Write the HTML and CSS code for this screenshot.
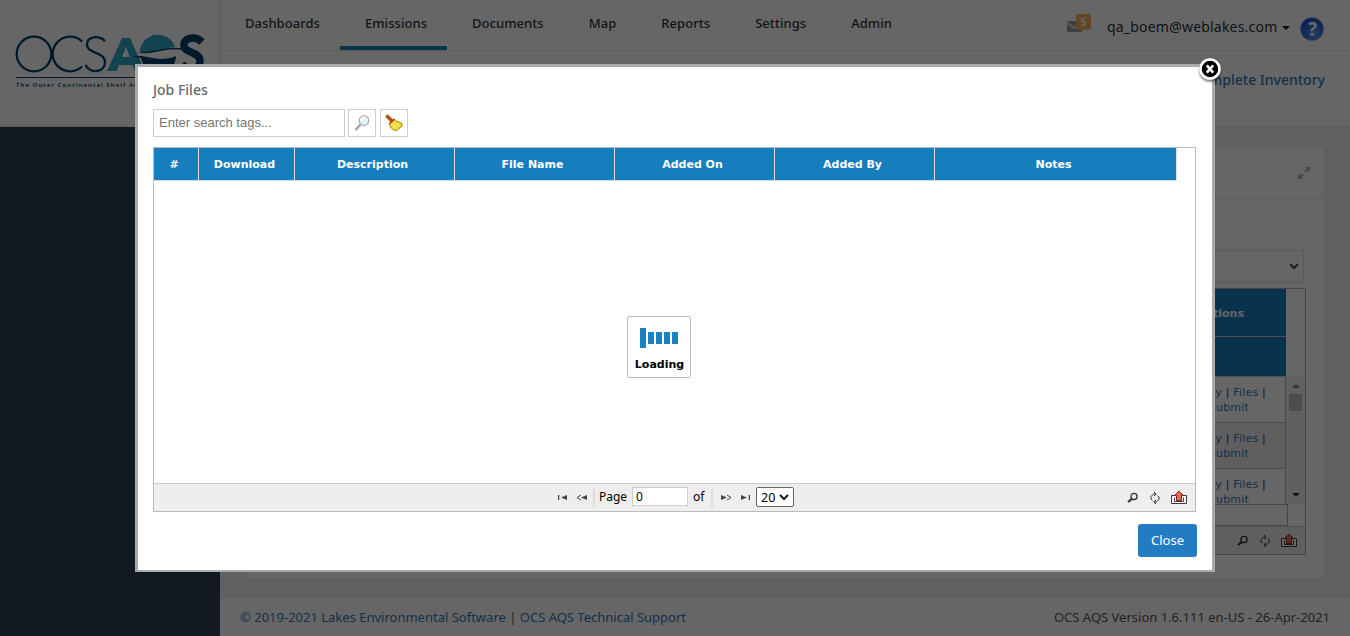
FILE: index.html
```html
<!DOCTYPE html>
<html lang="en">
<head>
<meta charset="utf-8">
<title>OCS AQS - Job Files</title>
<link rel="stylesheet" href="styles.css">
</head>
<body>
<svg width="0" height="0" class="defs">
  <symbol id="i-find" viewBox="0 0 12 12"><circle cx="7" cy="4.5" r="3.1" fill="none" stroke="#333" stroke-width="1.3"/><path d="M5 6.8L1 10" stroke="#333" stroke-width="2.2"/></symbol>
  <symbol id="i-sync" viewBox="0 0 12 12"><path d="M6.5 2H4.5L2 4.5V7L3.5 8.5M5.5 10H7.5L10 7.500V5L8.500 3.500M5 0L7.200 2L5 4M7 8L4.800 10L7 12" fill="none" stroke="#333"/></symbol>
  <symbol id="i-export" viewBox="0 0 16 14"><path d="M4 4.500H.500V12.500H15.500V4.500H12" fill="#fff" stroke="#435"/><path d="M3.500 6.500V10.500H12.500V6.500" fill="none" stroke="#534"/><path d="M8 .2L12.500 4.500H10.500V9.500H5.500V4.500H3.500Z" fill="#ee6a52" stroke="#74271e"/></symbol>
</svg>
<div class="app">
  <aside class="sidebar">
    <div class="brand">
      <svg width="219" height="126" viewBox="0 0 219 126">
        <g fill="none" stroke="#00406b" stroke-width="2.300">
          <circle cx="34" cy="54" r="17.300"/>
          <path d="M82 41.500A17.300 17.300 0 1 0 82 66.500"/>
          <path d="M105 41C99 35 87 36 87 44.500C87 54 105 51.500 105 62C105 73 90 74 85.500 65"/>
        </g>
        <path fill="#2cabc2" fill-rule="evenodd" d="M107 71L122 38H130L145 71H135L132.500 65H119L116.500 71ZM122 57H130L126 47Z"/>
        <path fill="#2cabc2" d="M140 51A18 18 0 0 1 175 47C163 48 155 54 140 51Z"/>
        <path fill="#00406b" d="M133 57C146 53 157 64 176 56C176 66 168 72 158 72C148 72 143 66 141 58Z"/>
        <path d="M140 52C154 55 164 45 185 50" fill="none" stroke="#00406b" stroke-width="1.500"/>
        <path d="M202 42C196 36 184 37 184 45C184 54 200 51 200 61C200 71 187 70 182 64" fill="none" stroke="#00406b" stroke-width="7.500"/>
        <path d="M16 77.500H204" stroke="#00406b"/>
        <text class="tagline" x="16" y="86.500">The Outer Continental Shelf Air Quality</text>
      </svg>
    </div>
  </aside>
  <div class="main">
    <header class="topbar">
      <nav class="nav"><a>Dashboards</a><a class="active">Emissions</a><a>Documents</a><a>Map</a><a>Reports</a><a>Settings</a><a>Admin</a></nav>
      <div class="user">
        <div class="mail"><svg width="15" height="11" viewBox="0 0 15 11"><rect width="15" height="11" rx="1.500" fill="#999c9e"/><path d="M0 1.500L6 6.500Q7.500 7.500 9 6.500L15 1.500" fill="none" stroke="#fff" stroke-width="1.200"/></svg><span class="badge">5</span></div>
        <span class="email">qa_boem@weblakes.com</span><i class="caret"></i>
        <span class="help">?</span>
      </div>
    </header>
    <div class="subbar"><a>Complete Inventory</a></div>
    <section class="content">
      <div class="card">
        <div class="card-head"><svg width="12" height="12" viewBox="0 0 12 12"><path d="M7 0H12V5L10.300 3.300L7.800 5.800L6.200 4.200L8.700 1.700ZM5 12H0V7L1.700 8.700L4.200 6.200L5.800 7.800L3.300 10.300Z" fill="#b0b0b0"/></svg></div>
        <div class="card-body">
          <div class="select"><svg width="10" height="7" viewBox="0 0 10 7"><path d="M1 1L5 5L9 1" fill="none" stroke="#444" stroke-width="2"/></svg></div>
          <div class="inventory">
            <div class="inv-head"><div>Actions</div><div></div></div>
            <div class="inv-body">
              <div class="inv-rows">
                <div class="row"><p><a>Inventory</a> | <a>Files</a> |</p><p><a>Resubmit</a></p></div>
                <div class="row alt"><p><a>Inventory</a> | <a>Files</a> |</p><p><a>Resubmit</a></p></div>
                <div class="row"><p><a>Inventory</a> | <a>Files</a> |</p><p><a>Resubmit</a></p></div>
              </div>
              <div class="scroll"><i class="up"></i><i class="thumb"></i><i class="down"></i></div>
            </div>
            <div class="hscroll"></div>
            <div class="tools inv-tools"><svg width="12" height="12"><use href="#i-find"/></svg><svg width="12" height="12"><use href="#i-sync"/></svg><svg width="16" height="14"><use href="#i-export"/></svg></div>
          </div>
        </div>
      </div>
    </section>
    <footer class="footer"><div><a>© 2019-2021 Lakes Environmental Software</a> | <a>OCS AQS Technical Support</a></div><div class="version">OCS AQS Version 1.6.111 en-US - 26-Apr-2021</div></footer>
  </div>
</div>
<div class="overlay"></div>
<div class="modal">
  <svg class="close-x" width="28" height="28" viewBox="0 0 28 28"><circle cx="14" cy="14" r="9.500" fill="#000" stroke="#fff" stroke-width="2.600"/><path d="M10.800 10.300L17.200 17.700M17.200 10.300L10.800 17.700" stroke="#fff" stroke-width="2.600"/></svg>
  <h1>Job Files</h1>
  <div class="search">
    <input type="text" placeholder="Enter search tags...">
    <button><svg width="16" height="16" viewBox="0 0 16 16"><path d="M6.500 9.500L1.500 15" stroke="#a4a4a4" stroke-width="2.500"/><circle cx="10" cy="5.500" r="4.800" fill="#e5f3fd" stroke="#aaa9b5" stroke-width="1.200"/><path d="M7 5.500Q7.500 3 10 2.700" stroke="#fff" stroke-width="1.500" fill="none"/></svg></button>
    <button><svg width="18" height="18" viewBox="0 0 18 18"><path d="M2.500 2.500L6 6" stroke="#a95813" stroke-width="3.600" stroke-linecap="round"/><path d="M9.500 5.500C12 8 14.500 8 17 9.500V12L11.500 16.500C7 16 5 13.500 4.500 9.500Z" fill="#f4dc39" stroke="#a87f00"/><path d="M8 10L11 14.500M10.500 9L14.500 12.500" stroke="#fff38c"/><path d="M4.500 9.500L9.500 5" stroke="#d3261d" stroke-width="1.600"/></svg></button>
  </div>
  <div class="grid">
    <div class="grid-head"><div>#</div><div>Download</div><div>Description</div><div>File Name</div><div>Added On</div><div>Added By</div><div>Notes</div></div>
    <div class="grid-body"><div class="loading"><svg width="40" height="22" viewBox="0 0 40 22"><g fill="#1c82c8"><path d="M1 1H7V21H1Z"/><path d="M9 5H15V17H9ZM17 5H23V17H17ZM25 5H31V17H25ZM33 5H39V17H33Z"/></g></svg><b>Loading</b></div></div>
    <div class="pager">
      <div class="pages">
        <svg class="first" width="9" height="7" viewBox="0 0 9 7"><path d="M.5 1V6" stroke="#444" stroke-width="1.500"/><path d="M9 1V6L3 3.500Z" fill="#444"/></svg>
        <svg class="prev" width="11" height="7" viewBox="0 0 11 7"><path d="M5 1L1 3.500L5 6" fill="none" stroke="#444"/><path d="M11 1V6L5 3.500Z" fill="#444"/></svg>
        <i class="sep"></i><span class="page-label">Page</span><input class="page" value="0"><span class="of">of</span><i class="sep"></i>
        <svg class="next" width="11" height="7" viewBox="0 0 11 7"><path d="M6 1L10 3.500L6 6" fill="none" stroke="#444"/><path d="M0 1V6L6 3.500Z" fill="#444"/></svg>
        <svg class="last" width="9" height="7" viewBox="0 0 9 7"><path d="M8.500 1V6" stroke="#444" stroke-width="1.500"/><path d="M0 1V6L6 3.500Z" fill="#444"/></svg>
        <div class="size">20<svg width="10" height="7" viewBox="0 0 10 7"><path d="M1 1L5 5L9 1" fill="none" stroke="#111" stroke-width="2"/></svg></div>
      </div>
      <div class="tools"><svg width="12" height="12"><use href="#i-find"/></svg><svg width="12" height="12"><use href="#i-sync"/></svg><svg width="16" height="14"><use href="#i-export"/></svg></div>
    </div>
  </div>
  <button class="close">Close</button>
</div>
</body>
</html>
```
FILE: styles.css
```css
* { box-sizing: border-box; }
body { margin: 0; height: 636px; overflow: hidden; font: 13px "Noto Sans", "Open Sans", sans-serif; color: #333; }
p { margin: 0; }
.defs { position: absolute; }
.app { display: flex; height: 636px; }
.sidebar { width: 220px; background: #2f4050; }
.brand { height: 127px; background: #fff; border-right: 1px solid #ddd; border-bottom: 1px solid #e7eaec; }
.tagline { font: 600 6px "Noto Sans", sans-serif; letter-spacing: 1.07px; fill: #00406b; }
.main { width: 1130px; display: flex; flex-direction: column; background: #f3f3f4; }
.topbar { height: 51px; background: #fff; border-bottom: 1px solid #e7eaec; display: flex; justify-content: space-between; }
.nav { display: flex; height: 50px; }
.nav a { padding: 14px 20px 0 25px; font-size: 13px; line-height: 18px; font-weight: 500; color: #2f3540; letter-spacing: .05px; }
.nav .active { border-bottom: 4px solid #1a7fbf; }
.user { display: flex; width: 283px; }
.mail { position: relative; width: 40px; padding-top: 21px; }
.mail svg { display: block; }
.badge { position: absolute; left: 9px; top: 14px; width: 15px; height: 16px; border-radius: 3px; background: #f8ac59; color: #fff; font: bold 10px/16px "Noto Sans", sans-serif; text-align: center; }
.email { padding-top: 17px; font-size: 14px; line-height: 20px; color: #25303c; letter-spacing: .2px; white-space: nowrap; }
.caret { margin: 26px 10px 0 5px; height: 4px; border: 4px solid transparent; border-top-color: #222; border-bottom: 0; }
.help { width: 24px; height: 24px; margin-top: 17px; border-radius: 50%; border: 1px solid #829be0; background: radial-gradient(circle at 60% 75%, #4f9bff, #2356cb 65%); color: #fff; text-align: center; font: bold 19px/22px "Noto Sans", sans-serif; }
.subbar { height: 76px; background: #fff; border-bottom: 1px solid #e7eaec; padding: 18px 25px 0; text-align: right; font-size: 14px; line-height: 21px; font-weight: 500; color: #337ab7; }
.content { flex: 1; padding: 20px 25px 17px; }
.card { height: 433px; background: #fff; border: 1px solid #e7eaec; }
.card-head { height: 51px; border-bottom: 1px solid #e7eaec; display: flex; justify-content: flex-end; padding: 19px 14px; }
.card-body { padding: 51px 18px 0 20px; }
.select { height: 33px; border: 1px solid #e0e0e0; margin-right: 2px; display: flex; align-items: center; justify-content: flex-end; padding-right: 4px; }
.inventory { margin-top: 5px; height: 267px; border: 1px solid #aaa; }
.inv-head { width: 1020px; font: bold 11px "DejaVu Sans", sans-serif; color: #fff; text-align: center; }
.inv-head div { height: 48px; margin-right: 1px; padding: 18px 0 0 889px; background: #177ebd; border-bottom: 1px solid #ccc; }
.inv-head div + div { height: 40px; }
.inv-body { height: 127px; display: flex; overflow: hidden; }
.inv-rows { width: 1020px; border-right: 1px solid #bbb; font: 11px/15px "DejaVu Sans", sans-serif; letter-spacing: .2px; }
.row { height: 46px; padding: 8px 19px 0; text-align: right; border-bottom: 1px solid #bbb; }
.row p + p { padding-right: 17px; }
.row.alt { background: #eee; }
.row a, .footer a { color: #337ab7; }
.scroll { width: 19px; background: #f1f1f1; display: flex; flex-direction: column; align-items: center; }
.up, .down { border: 4px solid transparent; }
.up { border-bottom-color: #888; border-top: 0; margin-top: 7px; }
.thumb { width: 13px; height: 17px; margin-top: 6px; background: #c1c1c1; }
.down { border-top-color: #444; border-bottom: 0; margin-top: auto; margin-bottom: 7px; }
.hscroll { width: 1021px; height: 22px; border: 1px solid #aaa; }
.tools { display: flex; align-items: center; }
.tools svg + svg { margin-left: 10px; }
.inv-tools { height: 28px; border-top: 1px solid #ccc; background: #eee; justify-content: flex-end; padding-right: 8px; }
.footer { height: 39px; background: #fff; border-top: 1px solid #e7eaec; padding: 10px 20px; display: flex; justify-content: space-between; line-height: 19px; color: #55595c; }
.overlay { position: absolute; inset: 0; background: rgba(0, 0, 0, .6); }
.modal { position: absolute; left: 135px; top: 64px; width: 1080px; height: 508px; border: 3px solid #aaa; border-bottom-width: 2px; background: #fff; padding: 13px 15px; }
.close-x { position: absolute; right: -12px; top: -12px; filter: drop-shadow(0 2px 1px rgba(0, 0, 0, .5)); }
h1 { margin: 0; font-size: 14px; line-height: 20px; font-weight: 500; color: #676a6c; }
.search { display: flex; margin-top: 9px; height: 28px; }
.search input { width: 192px; border: 1px solid #ccc; padding: 0 5px 1px; font: 13px "Liberation Sans", sans-serif; }
.search input::placeholder { color: #757575; }
.search button { width: 28px; padding: 0; margin-left: 4px; border: 1px solid #ccc; background: #fff; display: flex; align-items: center; justify-content: center; }
.search input + button { margin-left: 3px; }
.grid { margin-top: 10px; width: 1043px; height: 365px; border: 1px solid #bbb; display: flex; flex-direction: column; }
.grid-head { display: grid; width: 1023px; grid-template-columns: 45px 96px repeat(4, 160px) 242px; height: 33px; font: bold 11px/34px "DejaVu Sans", sans-serif; color: #fff; text-align: center; }
.grid-head div { height: 33px; background: #177ebd; border-right: 1px solid #ddd; border-bottom: 1px solid #ddd; padding-right: 4px; }
.grid-body { flex: 1; padding: 135px 0 0 473px; }
.loading { width: 64px; height: 62px; border: 1px solid #bbb; border-radius: 2px; display: flex; flex-direction: column; align-items: center; padding-top: 10px; color: #000; font: 11px/15px "DejaVu Sans", sans-serif; }
.loading b { margin-top: 8px; padding-left: 1px; }
.pager { height: 28px; border-top: 1px solid #ccc; background: #eee; display: flex; justify-content: space-between; padding: 0 8px 0 404px; }
.pages { display: flex; align-items: center; color: #000; font-size: 12px; }
.prev { margin-left: 9px; }
.sep { width: 2px; height: 18px; background: #ddd; margin-left: 6px; }
.page-label { width: 33px; margin-left: 4px; padding-bottom: 3px; }
.page { width: 56px; height: 19px; margin-bottom: 2px; border: 1px solid #ccc; padding: 0 3px; font: 12px "Noto Sans", sans-serif; color: #000; }
.of { width: 14px; margin-left: 5px; padding-bottom: 3px; }
.of + .sep { margin-left: 4px; }
.next { margin-left: 8px; }
.last { margin-left: 9px; }
.size { width: 38px; height: 20px; margin-left: 6px; margin-bottom: 1px; border: 1px solid #666; border-radius: 2px; background: #fff; display: flex; align-items: center; justify-content: space-between; padding: 0 4px; font-size: 12.5px; }
.close { display: block; margin: 12px 0 0 985px; width: 59px; height: 33px; border: 0; border-radius: 3px; background: #237bc3; color: #fff; font: 13px "Noto Sans", sans-serif; padding: 0 0 2px; }
```
